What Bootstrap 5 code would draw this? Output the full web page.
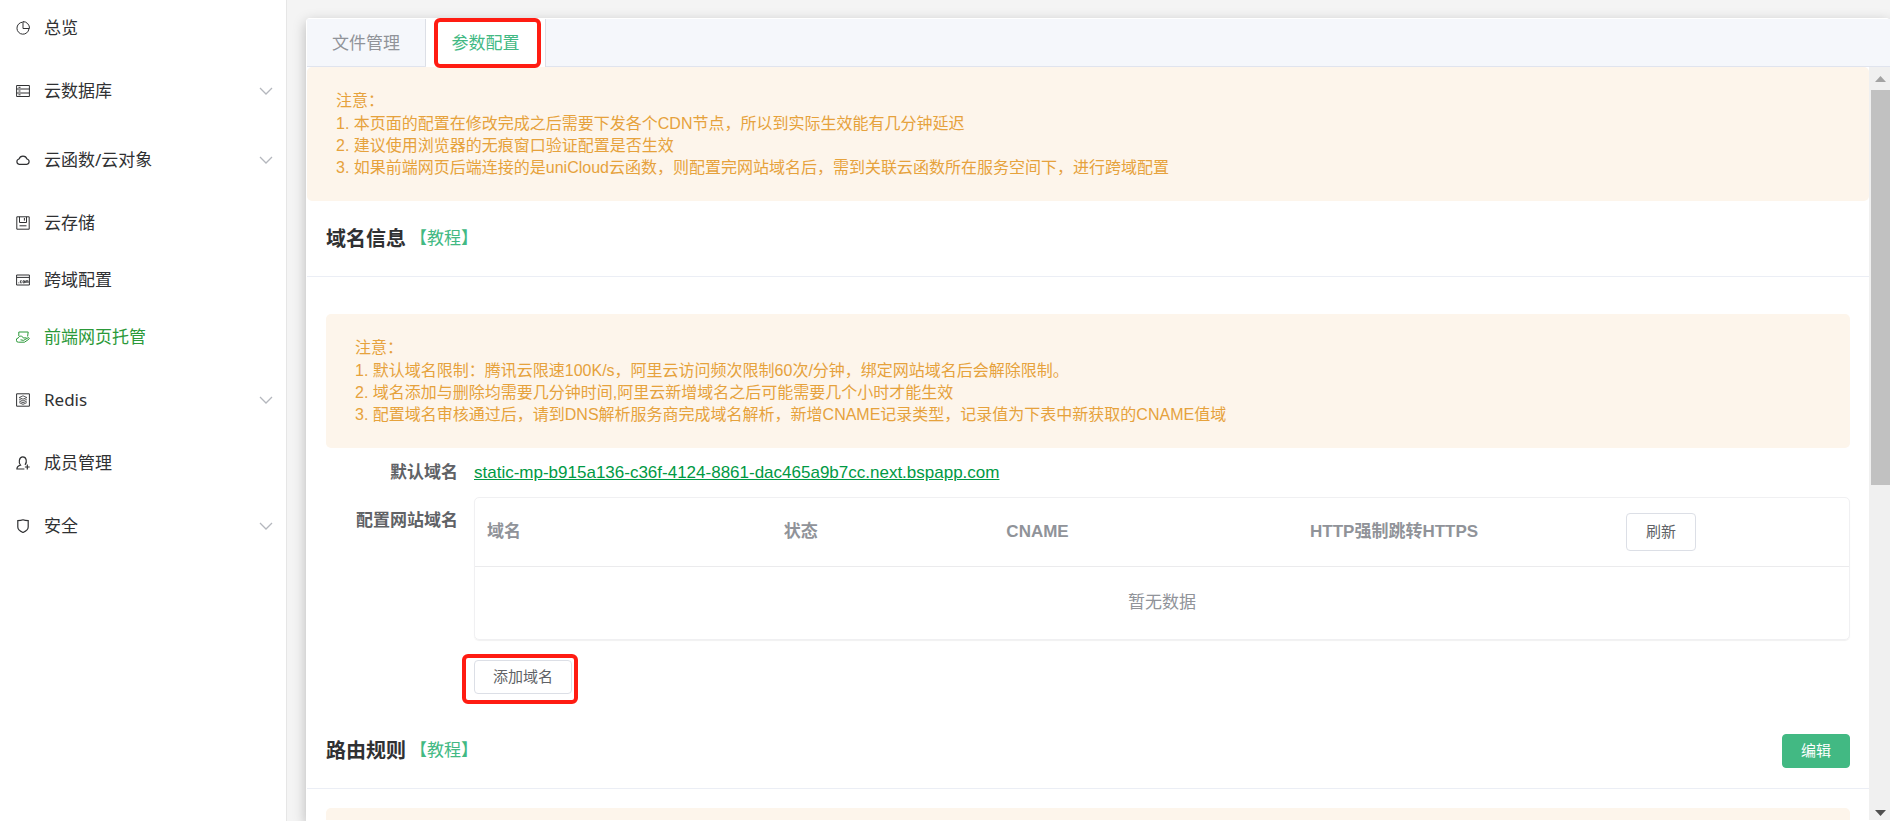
<!DOCTYPE html>
<html lang="zh-CN">
<head>
<meta charset="utf-8">
<meta name="viewport" content="width=device-width, initial-scale=1">
<title>前端网页托管</title>
<link href="https://cdn.jsdelivr.net/npm/bootstrap@5.3.0/dist/css/bootstrap.min.css" rel="stylesheet">
<style>
  body { background: #f4f4f4; color: #303133; font-family: "Liberation Sans", "Noto Sans CJK SC", sans-serif; font-size: 17px; line-height: 24px; }
  .side { width: 287px; background: #fff; border-right: 1px solid #e6e6e6; font-family: "Noto Sans", "Noto Sans CJK SC", sans-serif; }
  .side a { height: 57px; padding: 0 13px 0 16px; gap: 14px; color: #303133; text-decoration: none; }
  .side a:first-child { height: 56px; }
  .side a.has-sub { height: 69px; }
  .side a.current { color: #2b9939; }
  .side svg { width: 14px; height: 14px; fill: none; stroke: currentColor; }
  .side svg.chev { color: #b4b7bd; margin-left: auto; }
  .main-area { padding: 18px 0 0 19px; }
  .panel { min-height: 0; background: #fff; border: 1px solid #fff; border-right: 0; border-radius: 4px 4px 0 0; box-shadow: 0 4px 13px rgba(0, 0, 0, .25); }
  .pane { min-height: 0; }
  .tab-bar { background: #f5f7fb; border-bottom: 1px solid #e0e4ee; height: 48px; }
  .tab-bar button { border: 0; border-right: 1px solid #dcdfe6; background: none; color: #909399; padding: 2px 23px 0; height: 47px; width: 119px; white-space: nowrap; }
  .tab-bar button.active { width: 120px; height: 48px; background: #fff; color: #42b983; position: relative; }
  .hl { position: absolute; border: 4px solid #ff1c12; border-radius: 6px; pointer-events: none; }
  .hl-tab { inset: -1px 4px -1px 8px; }
  .hl-add { inset: -6px -6px -10px -12px; }
  .notice { background: #fdf5eb; color: #e6a23c; border-radius: 5px; padding: 23px 29px 22px; font-size: 16px; line-height: 22px; min-height: 134px; }
  .notice p { margin: 0 0 1px; }
  .sect { border-bottom: 1px solid #ebeef5; height: 76px; padding: 0 19px; }
  .sect h2 { font-size: 20px; line-height: 28px; font-weight: 700; margin: 0; }
  .sect a { color: #42b983; text-decoration: none; }
  .sect-body { padding: 37px 19px 0; }
  .sect-body + .sect { margin-top: 19px; }
  .sect-body.tight { padding-top: 19px; }
  .field-name { width: 132px; color: #606266; font-weight: 700; text-align: right; }
  .field-row { padding-top: 13px; }
  .field-row + .field-row { padding-top: 12px; }
  .site-link, .site-link:hover { color: #009944; }
  .grid-box { border: 1px solid #f0f0f2; border-radius: 5px; box-shadow: 0 1px 1px rgba(0, 0, 0, .06); }
  .grid-box table { table-layout: fixed; width: 100%; color: #909399; }
  .grid-box th { height: 68px; padding: 0 12px; border-bottom: 1px solid #ebebed; font-weight: 700; }
  .grid-box td { height: 73px; text-align: center; }
  .btn-line, .btn-go { font-size: 15px; line-height: 20px; padding: 6px 18px; border-radius: 4px; }
  .btn-line { border: 1px solid #dcdfe6; background: #fff; color: #606266; }
  .btn-tall { padding: 8px 19px; }
  .btn-go { background: #42b983; color: #fff; border: 1px solid #42b983; }
  .bar { width: 21px; background: #f0f0f0; padding-left: 2px; }
  .bar span { height: 23px; }
  .bar .thumb { height: auto; flex: 0 0 52.5%; background: #c1c1c1; }
</style>
</head>
<body>
<div class="d-flex vh-100 overflow-hidden">
  <nav class="side flex-shrink-0 d-flex flex-column">
    <a href="#" class="d-flex align-items-center"><svg viewBox="0 0 14 14"><path d="M6.500 1.200A6 6 0 1 0 12.900 8M7 .6v6.900h6.500A6.500 6.500 0 0 0 7 .6z"/></svg>总览</a>
    <a href="#" class="d-flex align-items-center has-sub"><svg viewBox="0 0 14 14"><path d="M.6 1.5h12.8v11H.6zM.6 5h12.8M.6 9h12.8M2.5 3.3h2M2.5 7h2M2.5 10.8h2"/></svg>云数据库<svg class="chev" viewBox="0 0 14 14"><path stroke-width="1.3" d="M1 4l6 6 6-6"/></svg></a>
    <a href="#" class="d-flex align-items-center has-sub"><svg viewBox="0 0 14 14"><path stroke-width="1.2" d="M3.200 11.300A2.700 2.700 0 0 1 3 6a4.200 4.200 0 0 1 8 0 2.700 2.700 0 0 1-.2 5.300z"/></svg>云函数/云对象<svg class="chev" viewBox="0 0 14 14"><path stroke-width="1.3" d="M1 4l6 6 6-6"/></svg></a>
    <a href="#" class="d-flex align-items-center"><svg viewBox="0 0 14 14"><path d="M.8.8h12.4v12.4H.8zM3.5.8v5.7h7V.8M8.4 2v2.6M3.5 9.8h7"/></svg>云存储</a>
    <a href="#" class="d-flex align-items-center"><svg viewBox="0 0 14 14"><path d="M.6 2h12.8v10H.6zM.6 4.4h12.8"/><path stroke-width=".9" d="M2.400 9.800h.8M5.800 7.800H4.400v2h1.400M7 7.800h1.500v2H7zM9.700 10V7.800h2.400V10M10.900 7.800V10"/></svg>跨域配置</a>
    <a href="#" class="d-flex align-items-center current"><svg viewBox="0 0 14 14"><path d="M2.800 6V2h9.400l-.6 4.500M2.500 12.200A2 2 0 0 1 2.300 8C3 5.500 6.500 5.500 7.300 8L10.500 7.800M4.500 9.800l3 .6 4.800-2.700c1.200 0 1.400 1 .6 1.500L8.500 12.200h-6"/></svg>前端网页托管</a>
    <a href="#" class="d-flex align-items-center has-sub"><svg viewBox="0 0 14 14"><path d="M.6.8h12.800v12.400H.6z"/><path stroke-width=".8" d="M7 2.800l3.800 1.700L7 6.200 3.200 4.500zM3.200 6.200L7 8l3.800-1.800M3.200 8L7 9.800 10.800 8M3.200 9.600L7 11.400l3.800-1.800"/></svg>Redis<svg class="chev" viewBox="0 0 14 14"><path stroke-width="1.3" d="M1 4l6 6 6-6"/></svg></a>
    <a href="#" class="d-flex align-items-center"><svg viewBox="0 0 14 14"><path stroke-width="1.200" d="M8.400 13H.9c0-2.500.9-3.200 3.600-3.900C2.300 6.500 3 .9 6.800.9s4.500 5.400 2.200 7.900M11.300 8.600v4.800M8.900 11h4.800"/></svg>成员管理</a>
    <a href="#" class="d-flex align-items-center has-sub"><svg viewBox="0 0 14 14"><path stroke-width="1.2" d="M7 .8c1.500.6 3.300.8 5.200.8V8c0 2.500-2.200 4.200-5.200 5.500C4 12.200 1.800 10.500 1.800 8V1.600C3.700 1.600 5.500 1.400 7 .8z"/></svg>安全<svg class="chev" viewBox="0 0 14 14"><path stroke-width="1.3" d="M1 4l6 6 6-6"/></svg></a>
  </nav>
  <main class="main-area flex-grow-1 d-flex flex-column">
    <div class="panel flex-grow-1 d-flex flex-column">
      <div class="tab-bar d-flex flex-shrink-0" role="tablist">
        <button type="button" role="tab">文件管理</button>
        <button type="button" role="tab" class="active" aria-selected="true">参数配置<span class="hl hl-tab"></span></button>
      </div>
      <div class="pane d-flex flex-grow-1">
        <div class="flex-grow-1 overflow-hidden">
          <div class="notice">
            <p>注意：</p>
            <div>1. 本页面的配置在修改完成之后需要下发各个CDN节点，所以到实际生效能有几分钟延迟</div>
            <div>2. 建议使用浏览器的无痕窗口验证配置是否生效</div>
            <div>3. 如果前端网页后端连接的是uniCloud云函数，则配置完网站域名后，需到关联云函数所在服务空间下，进行跨域配置</div>
          </div>
          <div class="sect d-flex align-items-center gap-1"><h2>域名信息</h2><a href="#">【教程】</a></div>
          <div class="sect-body">
            <div class="notice">
              <p>注意：</p>
              <div>1. 默认域名限制：腾讯云限速100K/s，阿里云访问频次限制60次/分钟，绑定网站域名后会解除限制。</div>
              <div>2. 域名添加与删除均需要几分钟时间,阿里云新增域名之后可能需要几个小时才能生效</div>
              <div>3. 配置域名审核通过后，请到DNS解析服务商完成域名解析，新增CNAME记录类型，记录值为下表中新获取的CNAME值域</div>
            </div>
            <div class="field-row d-flex gap-3">
              <div class="field-name flex-shrink-0">默认域名</div>
              <a class="site-link" href="#">static-mp-b915a136-c36f-4124-8861-dac465a9b7cc.next.bspapp.com</a>
            </div>
            <div class="field-row d-flex gap-3">
              <div class="field-name flex-shrink-0 pt-2 mt-1">配置网站域名</div>
              <div class="flex-grow-1">
                <div class="grid-box">
                  <table>
                    <colgroup><col style="width:21.6%"><col style="width:16.2%"><col style="width:22.1%"><col style="width:23%"><col></colgroup>
                    <thead><tr><th>域名</th><th>状态</th><th>CNAME</th><th>HTTP强制跳转HTTPS</th><th><button type="button" class="btn btn-line btn-tall">刷新</button></th></tr></thead>
                    <tbody><tr><td colspan="5">暂无数据</td></tr></tbody>
                  </table>
                </div>
                <div class="mt-3 pt-1 d-flex"><div class="position-relative"><button type="button" class="btn btn-line">添加域名</button><span class="hl hl-add"></span></div></div>
              </div>
            </div>
          </div>
          <div class="sect d-flex align-items-center gap-1"><h2>路由规则</h2><a href="#">【教程】</a><button type="button" class="btn btn-go ms-auto">编辑</button></div>
          <div class="sect-body tight"><div class="notice"></div></div>
        </div>
        <div class="bar flex-shrink-0 d-flex flex-column" aria-hidden="true">
          <span class="d-flex align-items-center justify-content-center"><svg width="11" height="6"><path d="M0 6L5.500 0 11 6z" fill="#a3a3a3"/></svg></span>
          <span class="thumb"></span>
          <span class="mt-auto d-flex align-items-end justify-content-center pb-1"><svg width="11" height="6"><path d="M0 0L5.500 6 11 0z" fill="#505050"/></svg></span>
        </div>
      </div>
    </div>
  </main>
</div>
<script src="https://cdn.jsdelivr.net/npm/bootstrap@5.3.0/dist/js/bootstrap.bundle.min.js"></script>
</body>
</html>
